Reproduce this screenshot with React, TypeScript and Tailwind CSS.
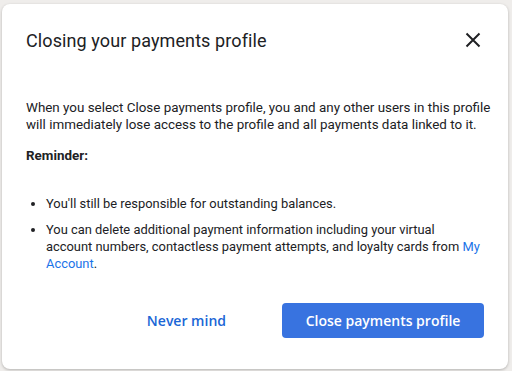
export default function App() {
  return (
    <div className="w-[512px] h-[371px] bg-[#efedeb] pt-[4px] pl-[2px] pr-[4px] pb-[2px] overflow-hidden" style={{ fontFamily: "Roboto, 'Liberation Sans', sans-serif" }}>
      <div className="h-[365px] bg-white rounded-[8px] shadow-[0_1px_3px_rgba(0,0,0,0.25)] flex flex-col pl-[24px] pr-[24px]">
        <div className="flex items-center justify-between pt-[19px] h-[53px]">
          <h2 className="text-[18px] text-[#202124] tracking-[0.1px]">
            Closing your payments profile
          </h2>
          <button className="w-[24px] h-[24px] flex items-center justify-center -mr-[1px] text-[#202124]">
            <svg width="16" height="16" viewBox="0 0 16 16" fill="none" stroke="currentColor" strokeWidth="2">
              <path d="M1.5 1.5L14.5 14.5M14.5 1.5L1.5 14.5" />
            </svg>
          </button>
        </div>
        <p className="mt-[42px] -mr-[10px] text-[13.4px] leading-[17px] text-[#202124]">
          When you select Close payments profile, you and any other users in this profile will immediately lose access to the profile and all payments data linked to it.
        </p>
        <p className="mt-[14px] text-[13.4px] leading-[17px] font-bold text-[#202124]">Reminder:</p>
        <ul className="mt-[31px] text-[12.9px] leading-[17px] text-[#202124] list-disc pl-[20px] flex flex-col gap-[9px]">
          <li>You'll still be responsible for outstanding balances.</li>
          <li>
            You can delete additional payment information including your virtual
            <br />
            account numbers, contactless payment attempts, and loyalty cards from <span className="text-[#1a73e8]">My Account</span>.
          </li>
        </ul>
        <div className="flex items-center justify-end mt-[30px] gap-[36px]">
          <button className="text-[14px] font-semibold text-[#1a66d6] px-[20px] h-[36px]" style={{ fontFamily: "'Open Sans', Roboto, sans-serif" }}>
            Never mind
          </button>
          <button className="w-[202px] h-[35px] rounded-[4px] bg-[#3873e0] text-white text-[14px] font-semibold" style={{ fontFamily: "'Open Sans', Roboto, sans-serif" }}>
            Close payments profile
          </button>
        </div>
      </div>
    </div>
  );
}
